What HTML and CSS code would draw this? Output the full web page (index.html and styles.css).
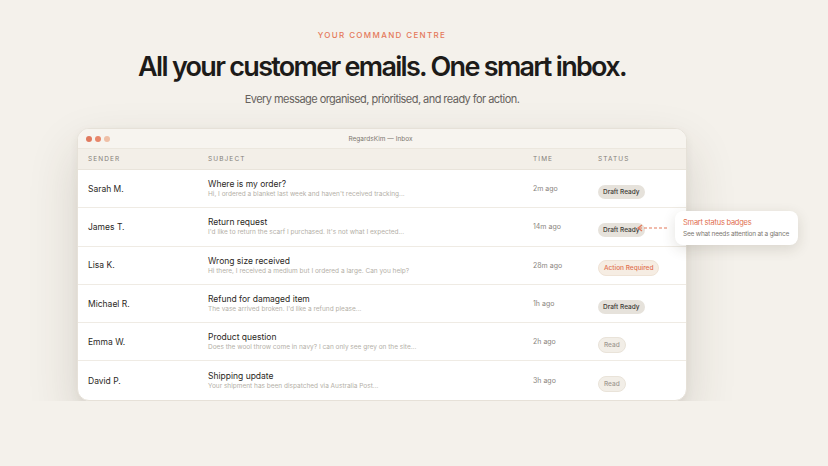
FILE: index.html
```html
<!DOCTYPE html>
<html lang="en">
<head>
    <meta charset="UTF-8">
    <meta name="viewport" content="width=device-width, initial-scale=1.0">
    <title>Your command centre</title>
    <link rel="stylesheet" href="styles.css">
</head>
<body>
    <section class="hero">
        <p class="eyebrow">YOUR COMMAND CENTRE</p>
        <h1>All your customer emails. One smart inbox.</h1>
        <p class="lead">Every message organised, prioritised, and ready for action.</p>

        <div class="stage">
            <div class="window">
                <div class="titlebar">
                    <div class="dots">
                        <span class="dot dot-1"></span>
                        <span class="dot dot-2"></span>
                        <span class="dot dot-3"></span>
                    </div>
                    <span class="wintitle">RegardsKim — Inbox</span>
                </div>
                <div class="row head">
                    <span>SENDER</span>
                    <span>SUBJECT</span>
                    <span>TIME</span>
                    <span>STATUS</span>
                </div>
                <div class="row">
                    <span class="sender">Sarah M.</span>
                    <div class="subject">
                        <span class="title">Where is my order?</span>
                        <span class="preview">Hi, I ordered a blanket last week and haven't received tracking...</span>
                    </div>
                    <span class="time">2m ago</span>
                    <span><span class="badge draft">Draft Ready</span></span>
                </div>
                <div class="row">
                    <span class="sender">James T.</span>
                    <div class="subject">
                        <span class="title">Return request</span>
                        <span class="preview">I'd like to return the scarf I purchased. It's not what I expected...</span>
                    </div>
                    <span class="time">14m ago</span>
                    <span><span class="badge draft">Draft Ready</span></span>
                </div>
                <div class="row">
                    <span class="sender">Lisa K.</span>
                    <div class="subject">
                        <span class="title">Wrong size received</span>
                        <span class="preview">Hi there, I received a medium but I ordered a large. Can you help?</span>
                    </div>
                    <span class="time">28m ago</span>
                    <span><span class="badge action">Action Required</span></span>
                </div>
                <div class="row">
                    <span class="sender">Michael R.</span>
                    <div class="subject">
                        <span class="title">Refund for damaged item</span>
                        <span class="preview">The vase arrived broken. I'd like a refund please...</span>
                    </div>
                    <span class="time">1h ago</span>
                    <span><span class="badge draft">Draft Ready</span></span>
                </div>
                <div class="row">
                    <span class="sender">Emma W.</span>
                    <div class="subject">
                        <span class="title">Product question</span>
                        <span class="preview">Does the wool throw come in navy? I can only see grey on the site...</span>
                    </div>
                    <span class="time">2h ago</span>
                    <span><span class="badge read">Read</span></span>
                </div>
                <div class="row last">
                    <span class="sender">David P.</span>
                    <div class="subject">
                        <span class="title">Shipping update</span>
                        <span class="preview">Your shipment has been dispatched via Australia Post...</span>
                    </div>
                    <span class="time">3h ago</span>
                    <span><span class="badge read">Read</span></span>
                </div>
            </div>

            <div class="callout">
                <svg class="pointer" width="30" height="8" viewBox="0 0 30 8">
                    <path d="M5 1 L1 4 L5 7" fill="none" stroke="#e4785a" stroke-width="1.2"/>
                    <line x1="2" y1="4" x2="30" y2="4" stroke="#e4785a" stroke-width="1.2" stroke-dasharray="3 2"/>
                </svg>
                <div class="tip">
                    <span class="tip-title">Smart status badges</span>
                    <span class="tip-text">See what needs attention at a glance</span>
                </div>
            </div>
        </div>
    </section>
</body>
</html>
```

FILE: styles.css
```css
* {
    box-sizing: border-box;
}
body {
    margin: 0;
    background: #f4f1eb;
    font-family: Inter, "Noto Sans", sans-serif;
    color: #1d1b19;
}
.hero {
    width: 764px;
    padding-top: 30px;
    display: flex;
    flex-direction: column;
    align-items: center;
}
.eyebrow {
    margin: 0;
    font-size: 8px;
    font-weight: 500;
    letter-spacing: 1.35px;
    color: #e4785a;
}
h1 {
    margin: 11px 0 0;
    font-size: 27px;
    font-weight: 600;
    letter-spacing: -1.7px;
    line-height: 32px;
}
.lead {
    margin: 9px 0 0;
    font-size: 11px;
    color: #66625d;
    letter-spacing: -0.55px;
}
.stage {
    position: relative;
    margin-top: 22px;
}
.window {
    width: 610px;
    background: #fff;
    border-radius: 12px;
    overflow: hidden;
    border: 1px solid #e6e1d8;
    box-shadow: 0 22px 50px rgba(60, 50, 30, 0.16), 0 3px 8px rgba(60, 50, 30, 0.06);
}
.titlebar {
    height: 20px;
    background: #f7f4ef;
    border-bottom: 1px solid #ece7de;
    display: flex;
    align-items: center;
    padding: 0 8px;
}
.dots {
    display: flex;
    gap: 3px;
}
.dot {
    width: 6px;
    height: 6px;
    border-radius: 50%;
}
.dot-1 { background: #e07a5f; }
.dot-2 { background: #e8866a; }
.dot-3 { background: #efbfa6; }
.wintitle {
    flex: 1;
    text-align: center;
    font-size: 6.5px;
    color: #7d7870;
    margin-right: 27px;
}
.row {
    display: grid;
    grid-template-columns: 120px 325px 65px 78px;
    align-items: center;
    padding: 0 10px;
    height: 38.3px;
    border-bottom: 1px solid #efebe4;
}
.row.last {
    border-bottom: none;
}
.row.head {
    height: 21px;
    background: #f3efe8;
    font-size: 6.5px;
    letter-spacing: 1.1px;
    color: #85807a;
    border-bottom: 1px solid #e9e4db;
}
.sender {
    font-size: 8.5px;
    color: #2b2825;
}
.subject {
    display: flex;
    flex-direction: column;
    gap: 1px;
}
.title {
    font-size: 8.5px;
    color: #2b2825;
}
.preview {
    font-size: 6.5px;
    color: #b4afa7;
}
.time {
    font-size: 7px;
    color: #8a857e;
}
.badge {
    display: inline-block;
    font-size: 6.5px;
    font-weight: 500;
    padding: 3px 5px;
    border-radius: 8px;
}
.draft {
    background: #e6e2db;
    color: #3b3834;
}
.action {
    background: #f6ede3;
    color: #e1704f;
    border: 1px solid #efe3d6;
}
.read {
    background: #f2eee7;
    color: #9e9890;
    border: 1px solid #e9e3d9;
}
.callout {
    position: absolute;
    top: 83px;
    left: 560px;
    display: flex;
    align-items: center;
    white-space: nowrap;
}
.pointer {
    display: block;
}
.tip {
    margin-left: 8px;
    background: #fff;
    border-radius: 8px;
    padding: 7px 9px 7px 8px;
    display: flex;
    flex-direction: column;
    gap: 3px;
    box-shadow: 0 4px 14px rgba(60, 50, 30, 0.14);
}
.tip-title {
    font-size: 7.5px;
    letter-spacing: -0.25px;
    color: #e1704f;
}
.tip-text {
    font-size: 6.5px;
    letter-spacing: -0.2px;
    color: #7b766f;
}
```
